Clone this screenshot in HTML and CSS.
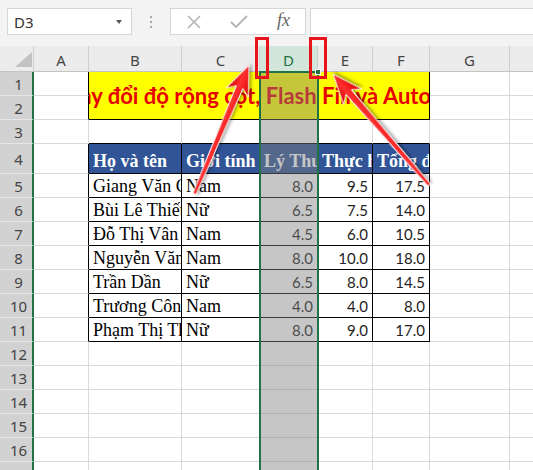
FILE: index.html
```html
<!DOCTYPE html>
<html lang="vi">
<head>
    <meta charset="UTF-8">
    <meta name="viewport" content="width=device-width, initial-scale=1.0">
    <title>Thay đổi độ rộng cột</title>
    <link rel="stylesheet" href="styles.css">
</head>
<body>
    <div class="toolbar">
        <div class="name-box"><span>D3</span><span class="caret"></span></div>
        <div class="grip"><i></i><i></i><i></i></div>
        <div class="fx-buttons">
            <svg width="14" height="14" viewBox="0 0 14 14"><path d="M1 1L13 13M13 1L1 13" stroke="#b4b4b4" stroke-width="1.6" fill="none"/></svg>
            <svg width="18" height="14" viewBox="0 0 18 14"><path d="M1 7L6 12L17 1" stroke="#b4b4b4" stroke-width="1.8" fill="none"/></svg>
            <span class="fx">fx</span>
        </div>
        <div class="formula"></div>
    </div>

    <div class="sheet">
        <!-- column headers -->
        <div class="corner"><span class="tri"></span></div>
        <div class="ch">A</div><div class="ch">B</div><div class="ch">C</div><div class="ch sel">D</div>
        <div class="ch">E</div><div class="ch">F</div><div class="ch">G</div><div class="ch"></div>

        <!-- rows 1-2: title -->
        <div class="rh">1</div><div class="c edge"></div>
        <div class="title"><span>Thay đổi độ rộng cột, Flash Fill và AutoFit</span></div>
        <div class="c"></div><div class="c"></div>
        <div class="rh">2</div><div class="c edge"></div><div class="c"></div><div class="c"></div>

        <div class="rh">3</div><div class="c"></div>
        <div class="c top"></div><div class="c top"></div><div class="c top"></div><div class="c top"></div><div class="c top"></div>
        <div class="c"></div><div class="c"></div>

        <!-- row 4: table header -->
        <div class="rh">4</div><div class="c edge"></div>
        <div class="t th">Họ và tên</div><div class="t th">Giới tính</div><div class="t th">Lý Thuyết</div>
        <div class="t th">Thực hành</div><div class="t th">Tổng điểm</div>
        <div class="c"></div><div class="c"></div>

        <div class="rh">5</div><div class="c edge"></div>
        <div class="t">Giang Văn Cường</div><div class="t">Nam</div>
        <div class="t num">8.0</div><div class="t num">9.5</div><div class="t num">17.5</div>
        <div class="c"></div><div class="c"></div>

        <div class="rh">6</div><div class="c edge"></div>
        <div class="t">Bùi Lê Thiết</div><div class="t">Nữ</div>
        <div class="t num">6.5</div><div class="t num">7.5</div><div class="t num">14.0</div>
        <div class="c"></div><div class="c"></div>

        <div class="rh">7</div><div class="c edge"></div>
        <div class="t">Đỗ Thị Vân Anh</div><div class="t">Nam</div>
        <div class="t num">4.5</div><div class="t num">6.0</div><div class="t num">10.5</div>
        <div class="c"></div><div class="c"></div>

        <div class="rh">8</div><div class="c edge"></div>
        <div class="t">Nguyễn Văn Nam</div><div class="t">Nam</div>
        <div class="t num">8.0</div><div class="t num">10.0</div><div class="t num">18.0</div>
        <div class="c"></div><div class="c"></div>

        <div class="rh">9</div><div class="c edge"></div>
        <div class="t">Trần Dần</div><div class="t">Nữ</div>
        <div class="t num">6.5</div><div class="t num">8.0</div><div class="t num">14.5</div>
        <div class="c"></div><div class="c"></div>

        <div class="rh">10</div><div class="c edge"></div>
        <div class="t">Trương Công Vinh</div><div class="t">Nam</div>
        <div class="t num">4.0</div><div class="t num">4.0</div><div class="t num">8.0</div>
        <div class="c"></div><div class="c"></div>

        <div class="rh">11</div><div class="c edge"></div>
        <div class="t">Phạm Thị Thu</div><div class="t">Nữ</div>
        <div class="t num">8.0</div><div class="t num">9.0</div><div class="t num">17.0</div>
        <div class="c"></div><div class="c"></div>

        <!-- empty rows -->
        <div class="rh">12</div><div class="c"></div><div class="c"></div><div class="c"></div><div class="c"></div><div class="c"></div><div class="c"></div><div class="c"></div><div class="c"></div>
        <div class="rh">13</div><div class="c"></div><div class="c"></div><div class="c"></div><div class="c"></div><div class="c"></div><div class="c"></div><div class="c"></div><div class="c"></div>
        <div class="rh">14</div><div class="c"></div><div class="c"></div><div class="c"></div><div class="c"></div><div class="c"></div><div class="c"></div><div class="c"></div><div class="c"></div>
        <div class="rh">15</div><div class="c"></div><div class="c"></div><div class="c"></div><div class="c"></div><div class="c"></div><div class="c"></div><div class="c"></div><div class="c"></div>
        <div class="rh">16</div><div class="c"></div><div class="c"></div><div class="c"></div><div class="c"></div><div class="c"></div><div class="c"></div><div class="c"></div><div class="c"></div>
        <div class="rh">17</div><div class="c"></div><div class="c"></div><div class="c"></div><div class="c"></div><div class="c"></div><div class="c"></div><div class="c"></div><div class="c"></div>

        <!-- selected column D -->
        <div class="col-sel"></div>
        <div class="handle"></div>
    </div>

    <svg class="marks" width="533" height="470" viewBox="0 0 533 470">
        <defs>
            <linearGradient id="red" gradientUnits="userSpaceOnUse" x1="0" y1="-12" x2="0" y2="12">
                <stop offset="0" stop-color="#d00000"/>
                <stop offset="0.45" stop-color="#ff3030"/>
                <stop offset="1" stop-color="#dc0000"/>
            </linearGradient>
        </defs>
        <rect x="256.5" y="38.5" width="11" height="39" fill="none" stroke="#e8141b" stroke-width="3"/>
        <rect x="310.5" y="38.5" width="15" height="39" fill="none" stroke="#e8141b" stroke-width="3"/>
        <g transform="translate(249 65) rotate(-67.07)">
            <polygon points="0,0 -30,-12 -24,-3.6 -140,-1.8 -140,1.8 -24,3.6 -30,12" fill="url(#red)" stroke="#fff" stroke-width="1"/>
        </g>
        <g transform="translate(333 74) rotate(-130.9)">
            <polygon points="0,0 -30,-12 -24,-3.6 -147,-1.8 -147,1.8 -24,3.6 -30,12" fill="url(#red)" stroke="#fff" stroke-width="1"/>
        </g>
    </svg>
</body>
</html>
```

FILE: styles.css
```css
body {
    margin: 0;
    width: 533px;
    height: 470px;
    overflow: hidden;
    position: relative;
    background-color: #f3f3f3;
    font-family: "Noto Sans", sans-serif;
}

/* formula bar */
.toolbar {
    display: flex;
    height: 46px;
    padding: 8px 0 0 7px;
    box-sizing: border-box;
}
.name-box {
    width: 125px;
    height: 27px;
    box-sizing: border-box;
    background-color: #fff;
    border: 1px solid #d6d6d6;
    display: flex;
    align-items: center;
    justify-content: space-between;
    padding: 0 9px 0 6px;
    font-size: 15px;
    color: #333;
}
.caret {
    border-left: 3px solid transparent;
    border-right: 3px solid transparent;
    border-top: 4px solid #555;
}
.grip {
    width: 38px;
    height: 27px;
    display: flex;
    flex-direction: column;
    align-items: center;
    justify-content: center;
    gap: 3px;
}
.grip i {
    width: 2px;
    height: 2px;
    background-color: #a8a8a8;
}
.fx-buttons {
    width: 136px;
    height: 27px;
    box-sizing: border-box;
    background-color: #fff;
    border: 1px solid #d6d6d6;
    display: grid;
    grid-template-columns: repeat(3, 45px);
    justify-items: center;
    align-items: center;
}
.fx {
    font-family: "Liberation Serif", serif;
    font-style: italic;
    font-size: 18px;
    color: #666;
    margin-top: -2px;
}
.formula {
    flex: 1;
    height: 27px;
    margin-left: 4px;
    box-sizing: border-box;
    background-color: #fff;
    border: 1px solid #d6d6d6;
    border-right: none;
}

/* grid */
.sheet {
    position: relative;
    display: grid;
    grid-template-columns: 34px 55px 93px 78px 58px 55px 57px 80px 60px;
    grid-template-rows: 26px 24px 24px 24px 30px repeat(13, 24px);
    background-color: #fff;
}
.sheet > div {
    box-sizing: border-box;
    overflow: hidden;
    white-space: nowrap;
}
.ch, .corner {
    background-color: #ececec;
    border-right: 1px solid #cfcfcf;
    border-bottom: 1px solid #c4c4c4;
    display: flex;
    align-items: center;
    justify-content: center;
    padding-top: 3px;
    font-size: 15px;
    color: #444;
}
.ch.sel {
    background-color: #d3e6db;
    color: #217346;
}
.corner {
    justify-content: flex-end;
    align-items: flex-end;
    padding: 0 1px 4px 0;
}
.tri {
    width: 0;
    height: 0;
    border-left: 17px solid transparent;
    border-bottom: 15px solid #c2c2c2;
}
.rh {
    background-color: #d2d2d2;
    border-right: 2px solid #217346;
    border-bottom: 1px solid #e6e6e6;
    display: flex;
    align-items: center;
    justify-content: center;
    padding-left: 5px;
    font-size: 15px;
    color: #444;
}
.c {
    border-right: 1px solid #d9d9d9;
    border-bottom: 1px solid #d9d9d9;
}
.c.edge {
    border-right-color: #000;
}
.c.top {
    border-bottom-color: #000;
}
.title {
    grid-column: span 5;
    grid-row: span 2;
    background-color: #ffff00;
    border-right: 1px solid #000;
    border-bottom: 1px solid #000;
    display: flex;
    align-items: center;
    justify-content: center;
    padding-right: 6px;
    font-family: Lato, sans-serif;
    font-weight: bold;
    font-size: 22px;
    color: #e60000;
}
.t {
    border-right: 1px solid #000;
    border-bottom: 1px solid #000;
    display: flex;
    align-items: flex-end;
    padding: 0 3px 1px 4px;
    font-family: "Liberation Serif", serif;
    font-size: 18px;
    line-height: 20px;
    color: #000;
}
.t.th {
    background-color: #305496;
    color: #fff;
    font-weight: bold;
    padding-bottom: 2px;
}
.t.num {
    justify-content: flex-end;
    padding-right: 4px;
    font-family: Lato, sans-serif;
    font-size: 15px;
    color: #222;
}

/* selection of column D */
.sheet > .col-sel {
    position: absolute;
    left: 259px;
    top: 25px;
    bottom: 0;
    width: 60px;
    border: 2px solid #217346;
    border-bottom: none;
    background-color: rgba(128, 128, 128, 0.45);
}
.sheet > .handle {
    position: absolute;
    left: 315px;
    top: 23px;
    width: 6px;
    height: 6px;
    background-color: #217346;
    border: 1px solid #fff;
}

.marks {
    position: absolute;
    left: 0;
    top: 0;
    pointer-events: none;
}
.marks polygon {
    filter: drop-shadow(1px 2px 1.5px rgba(0, 0, 0, 0.35));
}
```
